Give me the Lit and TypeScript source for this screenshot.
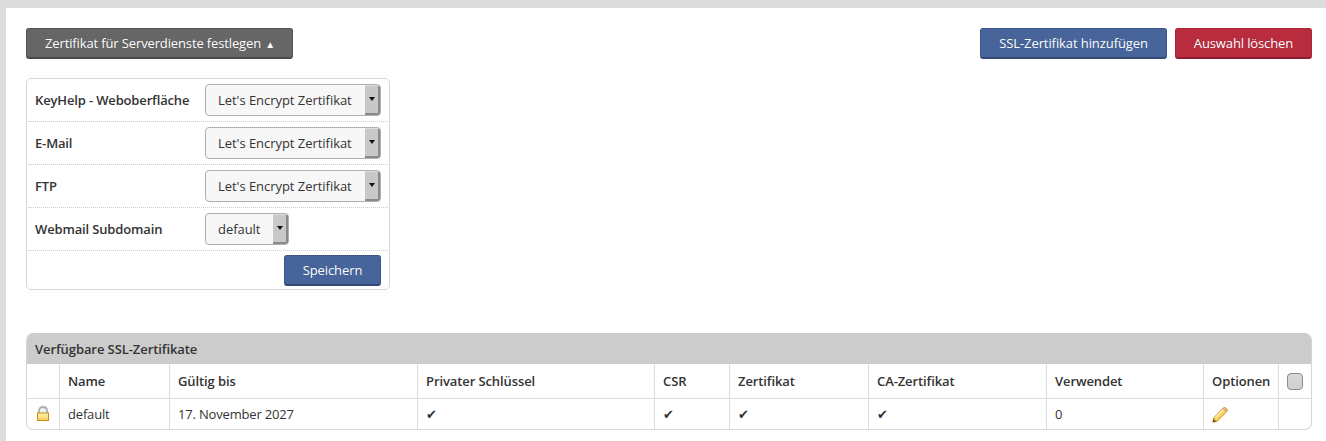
import { LitElement, html, css, svg } from 'lit';
import { customElement } from 'lit/decorators.js';

const lockIcon = svg`
  <svg class="icon" width="14" height="16" viewBox="0 0 14 16">
    <defs>
      <linearGradient id="lockBody" x1="0" y1="0" x2="0" y2="1">
        <stop offset="0" stop-color="#fff6b8" />
        <stop offset="1" stop-color="#f2cc58" />
      </linearGradient>
    </defs>
    <path d="M3 7V4.500C3 2.500 4.700 1 7 1s4 1.500 4 3.500V7" fill="#f0f0f0" stroke="#b0b0b0" stroke-width="1.800" />
    <rect x="1.500" y="7" width="11" height="7.500" fill="url(#lockBody)" stroke="#c78c10" />
  </svg>
`;

const pencilIcon = svg`
  <svg class="icon pencil" width="16" height="16" viewBox="0 0 16 16">
    <path d="M.8 15.200l1-4.500L11.400.9c.6-.6 1.600-.6 2.200 0l1.400 1.400c.6.6.6 1.500 0 2.100L5.300 14.200z" fill="#f5d35e" stroke="#c68a1e" stroke-width=".9" stroke-linejoin="round" />
    <path d="M3.500 10.500l8.800-8.600" stroke="#fff2b0" stroke-width="1.500" fill="none" />
    <path d="M11 1.500l3.500 3.300" stroke="#e8a48a" stroke-width="2" fill="none" />
    <path d="M.8 15.200l.8-3.400 2.700 2.600z" fill="#6b4a20" />
  </svg>
`;

const columns = [32, 110, 248, 237, 75, 139, 178, 157, 75, 33];

@customElement('app-root')
export class AppRoot extends LitElement {
  static styles = css`
    :host {
      display: block;
      height: 441px;
      overflow: hidden;
      background: #dcdcdc;
      font-family: "Open Sans", sans-serif;
      font-size: 13px;
      color: #333;
      padding: 8px 0 0 6px;
      box-sizing: border-box;
    }
    .page {
      background: #fff;
      height: 433px;
      padding: 20px 14px 0 20px;
      box-sizing: border-box;
    }
    .toolbar {
      display: flex;
      justify-content: space-between;
    }
    .actions {
      display: flex;
      gap: 8px;
    }
    .btn {
      height: 31px;
      box-sizing: border-box;
      padding: 0 18px;
      border: 1px solid;
      border-bottom-width: 2px;
      border-radius: 3px;
      color: #fff;
      font: inherit;
      line-height: 28px;
      letter-spacing: -0.13px;
      white-space: nowrap;
      text-shadow: 0 0 1px rgba(0, 0, 0, 0.2);
    }
    .btn-gray {
      background: #666;
      border-color: #555 #555 #4a4a4a;
      padding-right: 17px;
    }
    .btn-blue {
      background: #47659b;
      border-color: #3c5784 #3c5784 #324a72;
      letter-spacing: -0.09px;
    }
    .btn-red {
      background: #b92c3d;
      border-color: #a92536 #a92536 #8a1e2c;
    }
    .arrow {
      font-size: 10px;
      margin-left: 1px;
    }
    .services {
      width: 364px;
      height: 212px;
      box-sizing: border-box;
      margin-top: 19px;
      border: 1px solid #d6d6d6;
      border-radius: 5px;
      padding: 0 1px;
    }
    .row {
      display: flex;
      align-items: center;
      height: 43px;
      box-sizing: border-box;
      padding: 0 7px 0 7px;
      border-bottom: 1px dotted #ccc;
    }
    .row label {
      width: 170px;
      font-weight: 600;
      letter-spacing: -0.15px;
    }
    .select {
      display: flex;
      height: 32px;
      box-sizing: border-box;
      border: 1px solid #b0b0b0;
      border-radius: 4px;
      background: #f7f7f7;
      overflow: hidden;
      margin-top: -1px;
    }
    .select span {
      padding: 0 13px 0 12px;
      line-height: 30px;
      letter-spacing: -0.04px;
      white-space: nowrap;
    }
    .select i {
      display: flex;
      align-items: center;
      justify-content: center;
      width: 13px;
      background: #c8c8c8;
      border-right: 2px solid #8a8a8a;
      border-bottom: 2px solid #8a8a8a;
      border-top: 1px solid #ddd;
      margin-left: auto;
    }
    .select i::after {
      content: "";
      border: 3px solid transparent;
      border-top: 4px solid #111;
      border-bottom: 0;
    }
    .wide {
      width: 176px;
    }
    .save {
      display: flex;
      justify-content: flex-end;
      padding: 4px 7px 0 0;
    }
    .save .btn {
      width: 97px;
      padding: 0;
      text-align: center;
    }
    .certs {
      margin-top: 43px;
      width: 1286px;
      box-sizing: border-box;
      border: 1px solid #d6d6d6;
      border-top: 0;
      border-radius: 7px;
      overflow: hidden;
    }
    .certs h2 {
      margin: 0;
      height: 31px;
      padding: 0 8px;
      background: #ccc;
      font-size: 13px;
      font-weight: 600;
      line-height: 32px;
      letter-spacing: -0.08px;
      color: #333;
    }
    table {
      width: 100%;
      table-layout: fixed;
      border-collapse: collapse;
    }
    th, td {
      border-left: 1px solid #ddd;
      padding: 0 8px 0 8.5px;
      text-align: left;
      font-size: 13px;
      white-space: nowrap;
    }
    th:first-child, td:first-child {
      border-left: 0;
    }
    th {
      height: 34px;
      font-weight: 600;
      letter-spacing: -0.1px;
      border-bottom: 1px solid #ddd;
    }
    td {
      height: 30px;
      letter-spacing: -0.17px;
    }
    .mark {
      font-family: "DejaVu Sans", sans-serif;
      font-size: 13px;
    }
    .icon {
      display: block;
    }
    .pencil {
      margin-top: 1px;
    }
    td.cell-lock {
      padding: 0 0 0 9px;
    }
    .check {
      display: block;
      width: 16px;
      height: 17px;
      box-sizing: border-box;
      border: 1px solid #8c8c8c;
      border-radius: 4px;
      background: linear-gradient(#d8d8d8, #d0d0d0);
    }
  `;

  renderRow(name: string, value: string, wide = true) {
    return html`
      <div class="row">
        <label>${name}</label>
        <div class="select ${wide ? 'wide' : ''}"><span>${value}</span><i></i></div>
      </div>
    `;
  }

  render() {
    const le = "Let's Encrypt Zertifikat";
    return html`
      <div class="page">
        <div class="toolbar">
          <div class="btn btn-gray">Zertifikat für Serverdienste festlegen <span class="arrow">▲</span></div>
          <div class="actions">
            <div class="btn btn-blue">SSL-Zertifikat hinzufügen</div>
            <div class="btn btn-red">Auswahl löschen</div>
          </div>
        </div>

        <div class="services">
          ${this.renderRow('KeyHelp - Weboberfläche', le)}
          ${this.renderRow('E-Mail', le)}
          ${this.renderRow('FTP', le)}
          ${this.renderRow('Webmail Subdomain', 'default', false)}
          <div class="save"><div class="btn btn-blue">Speichern</div></div>
        </div>

        <div class="certs">
          <h2>Verfügbare SSL-Zertifikate</h2>
          <table>
            <colgroup>
              ${columns.map((w) => html`<col style="width:${w}px" />`)}
            </colgroup>
            <thead>
              <tr>
                <th></th>
                <th>Name</th>
                <th>Gültig bis</th>
                <th>Privater Schlüssel</th>
                <th>CSR</th>
                <th>Zertifikat</th>
                <th>CA-Zertifikat</th>
                <th>Verwendet</th>
                <th>Optionen</th>
                <th><span class="check"></span></th>
              </tr>
            </thead>
            <tbody>
              <tr>
                <td class="cell-lock">${lockIcon}</td>
                <td>default</td>
                <td>17. November 2027</td>
                <td class="mark">✔</td>
                <td class="mark">✔</td>
                <td class="mark">✔</td>
                <td class="mark">✔</td>
                <td>0</td>
                <td>${pencilIcon}</td>
                <td></td>
              </tr>
            </tbody>
          </table>
        </div>
      </div>
    `;
  }
}
